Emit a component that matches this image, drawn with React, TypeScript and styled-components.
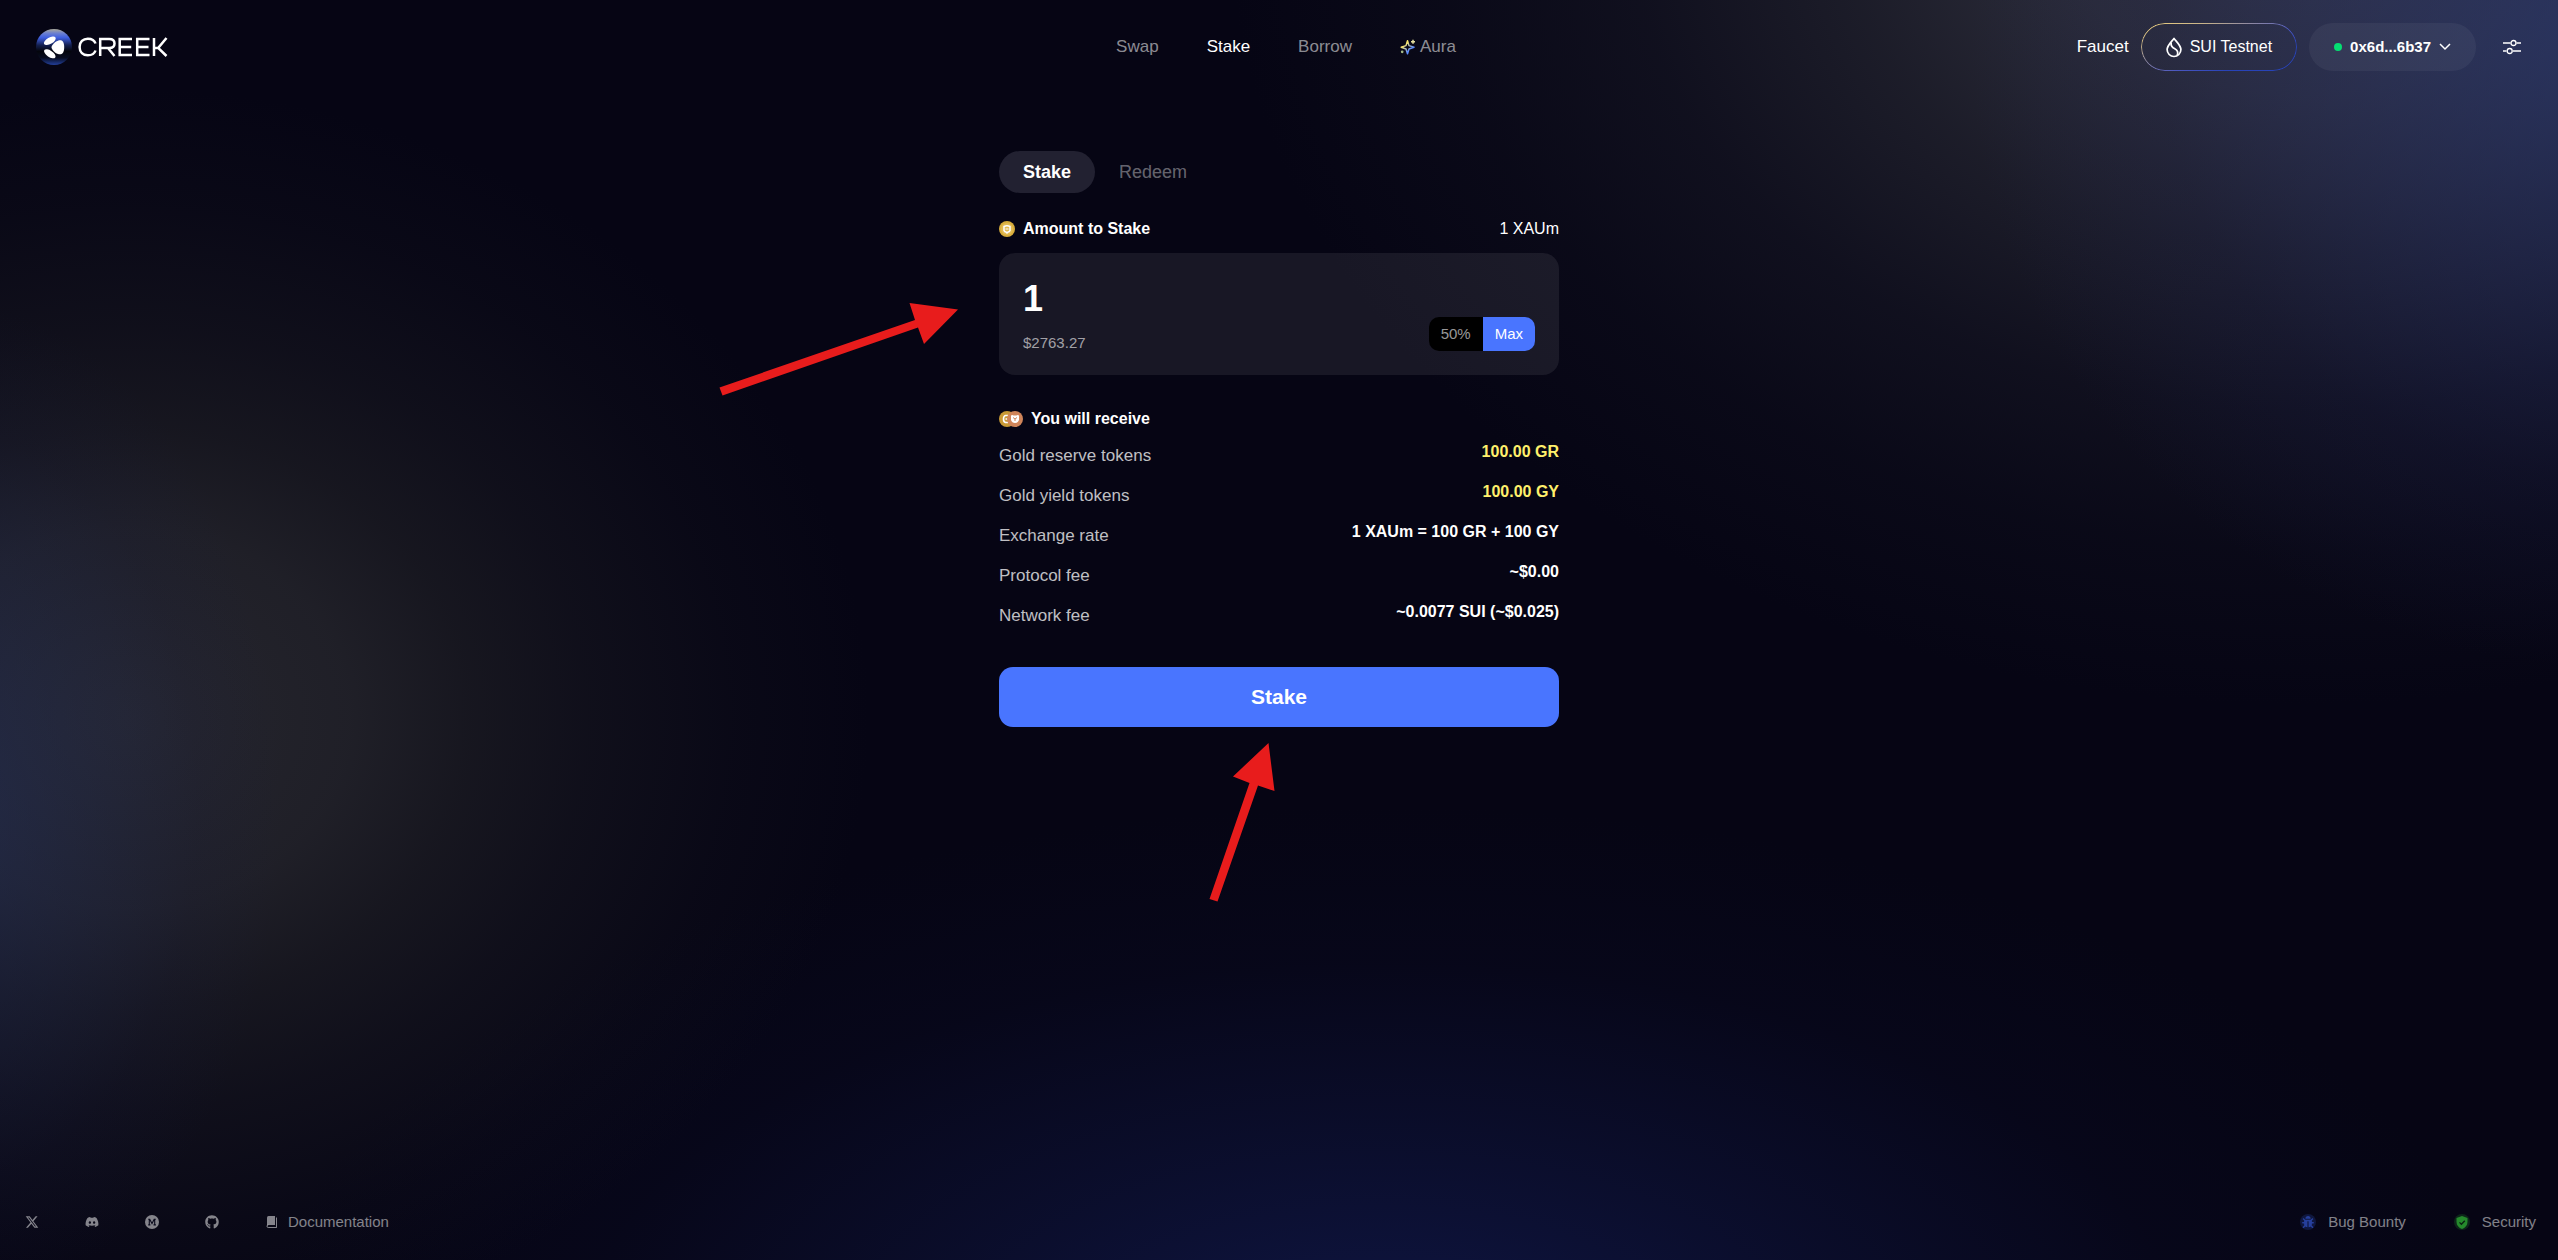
import React, { useState } from "react";
import styled, { createGlobalStyle } from "styled-components";
import { FaDiscord, FaGithub, FaBug } from "react-icons/fa";
import { FaXTwitter } from "react-icons/fa6";

const Global = createGlobalStyle`
  *, *::before, *::after { box-sizing: border-box; }
  body {
    margin: 0;
    background: #060514;
    color: #fff;
    font-family: "Liberation Sans", Arial, sans-serif;
    font-size: 16px;
    line-height: 24px;
  }
  button, input { font: inherit; color: inherit; border: 0; background: none; padding: 0; margin: 0; }
  button { cursor: pointer; }
  a { color: inherit; text-decoration: none; }
  svg { display: block; flex: none; }
`;

const Page = styled.div`
  position: relative;
  min-height: 100vh;
  display: flex;
  flex-direction: column;
  overflow: hidden;
  background:
    radial-gradient(ellipse 25% 50% at 102% 3%, rgba(44, 60, 122, 0.62) 0%, rgba(40, 52, 112, 0.38) 40%, rgba(30, 36, 88, 0.2) 70%, rgba(20, 24, 70, 0) 100%),
    radial-gradient(ellipse 42% 62% at 90% -6%, rgba(50, 51, 66, 1) 0%, rgba(46, 47, 60, 0.92) 22%, rgba(42, 43, 54, 0.62) 42%, rgba(36, 37, 50, 0.34) 62%, rgba(28, 29, 42, 0.18) 80%, rgba(6, 5, 20, 0) 100%),
    radial-gradient(ellipse 13% 40% at -2% 64%, rgba(36, 50, 98, 0.5) 0%, rgba(32, 44, 90, 0.28) 45%, rgba(22, 28, 72, 0.12) 75%, rgba(20, 28, 70, 0) 100%),
    radial-gradient(ellipse 29% 50% at 5% 57%, rgba(38, 38, 46, 1) 0%, rgba(36, 36, 43, 0.85) 30%, rgba(34, 34, 39, 0.6) 46%, rgba(32, 32, 38, 0.38) 62%, rgba(28, 28, 36, 0.16) 82%, rgba(6, 5, 20, 0) 100%),
    radial-gradient(ellipse 44% 44% at 54% 108%, rgba(15, 22, 68, 1) 0%, rgba(13, 18, 56, 0.62) 42%, rgba(10, 12, 42, 0.25) 72%, rgba(6, 5, 20, 0) 100%),
    #060514;
`;

const Header = styled.header`
  display: grid;
  grid-template-columns: 1fr auto 1fr;
  align-items: center;
  height: 94px;
  padding: 0 22px 0 36px;
`;

const Brand = styled.a`
  display: flex;
  align-items: center;
  gap: 6px;
  justify-self: start;
`;

const Nav = styled.nav`
  display: flex;
  gap: 48px;
  font-size: 17px;
`;

const NavLink = styled.a<{ $active?: boolean }>`
  display: flex;
  align-items: center;
  gap: 4px;
  color: ${(p) => (p.$active ? "#fff" : "rgba(255, 255, 255, 0.55)")};
`;

const Actions = styled.div`
  display: flex;
  align-items: center;
  justify-self: end;
  gap: 12px;
`;

const FaucetLink = styled.a`
  font-size: 17px;
`;

const Pill = styled.button<{ $outlined?: boolean }>`
  position: relative;
  display: flex;
  align-items: center;
  gap: 8px;
  height: 48px;
  padding: 0 25px;
  border-radius: 24px;
  background: ${(p) => (p.$outlined ? "transparent" : "rgba(255, 255, 255, 0.05)")};

  &::before {
    content: "";
    display: ${(p) => (p.$outlined ? "block" : "none")};
    position: absolute;
    inset: 0;
    padding: 1px;
    border-radius: 24px;
    background: linear-gradient(160deg, #f0d27a 0%, #c9b48a 22%, #4a56c0 58%, #2843b8 75%);
    mask: linear-gradient(#000 0 0) content-box exclude, linear-gradient(#000 0 0);
  }
`;

const Address = styled.span`
  font-size: 15px;
  font-weight: 700;
`;

const Dot = styled.span`
  width: 8px;
  height: 8px;
  border-radius: 50%;
  background: #05df72;
`;

const IconButton = styled.button`
  display: grid;
  place-items: center;
  width: 48px;
  height: 48px;
`;

const Main = styled.main`
  flex: 1;
  width: 100%;
  max-width: 560px;
  margin: 0 auto;
  padding-top: 57px;
`;

const Tabs = styled.div`
  display: flex;
`;

const Tab = styled.button<{ $active: boolean }>`
  height: 42px;
  padding: 0 24px;
  border-radius: 21px;
  font-size: 18px;
  font-weight: ${(p) => (p.$active ? 700 : 400)};
  color: ${(p) => (p.$active ? "#fff" : "rgba(255, 255, 255, 0.4)")};
  background: ${(p) => (p.$active ? "#222131" : "transparent")};
`;

const SectionHead = styled.div`
  display: flex;
  justify-content: space-between;
  align-items: center;
`;

const SectionTitle = styled.label`
  display: flex;
  align-items: center;
  gap: 8px;
  font-weight: 700;
`;

const AmountSection = styled.section`
  margin-top: 24px;
`;

const AmountCard = styled.div`
  display: flex;
  justify-content: space-between;
  align-items: flex-end;
  height: 122px;
  margin-top: 12px;
  padding: 20px 24px;
  border-radius: 16px;
  background: rgba(255, 255, 255, 0.075);
`;

const AmountColumn = styled.div`
  display: flex;
  flex-direction: column;
  flex: 1;
  gap: 8px;
`;

const AmountInput = styled.input`
  width: 100%;
  height: 48px;
  outline: none;
  font-size: 36px;
  font-weight: 700;
`;

const Fiat = styled.span`
  font-size: 15px;
  color: rgba(255, 255, 255, 0.6);
`;

const Presets = styled.div`
  display: flex;
  margin-bottom: 4px;
  border-radius: 10px;
  overflow: hidden;
`;

const Preset = styled.button<{ $active?: boolean }>`
  height: 34px;
  padding: 0 12px;
  font-size: 15px;
  color: ${(p) => (p.$active ? "#fff" : "rgba(255, 255, 255, 0.6)")};
  background: ${(p) => (p.$active ? "#4975ff" : "#000")};
`;

const Receive = styled.section`
  margin-top: 32px;
`;

const ReceiveTitle = styled.h2`
  display: flex;
  align-items: center;
  gap: 8px;
  margin: 0 0 11px;
  font-size: 16px;
  line-height: 24px;
`;

const Rows = styled.dl`
  display: grid;
  gap: 12px;
  margin: 0;
`;

const Row = styled.div`
  display: flex;
  justify-content: space-between;
  height: 28px;
`;

const Term = styled.dt`
  font-size: 17px;
  line-height: 28px;
  color: rgba(255, 255, 255, 0.75);
`;

const Value = styled.dd<{ $gold?: boolean }>`
  margin: 0;
  font-weight: 700;
  line-height: 20px;
  color: ${(p) => (p.$gold ? "#fff06b" : "#fff")};
`;

const Submit = styled.button`
  width: 100%;
  height: 60px;
  margin-top: 37px;
  border-radius: 14px;
  background: #4975ff;
  font-size: 21px;
  font-weight: 700;
`;

const Footer = styled.footer`
  display: flex;
  justify-content: space-between;
  align-items: center;
  padding: 0 22px 26px 24px;
  font-size: 15px;
  color: rgba(255, 255, 255, 0.5);
`;

const FooterLinks = styled.div<{ $gap: number }>`
  display: flex;
  gap: ${(p) => p.$gap}px;
`;

const FooterLink = styled.a<{ $gap?: number }>`
  display: flex;
  align-items: center;
  gap: ${(p) => p.$gap ?? 8}px;
`;

const IconBox = styled.span`
  display: grid;
  place-items: center;
  width: 16px;
  height: 16px;
`;

const Glow = styled(IconBox)<{ $color: string; $halo: string }>`
  border-radius: 50%;
  color: ${(p) => p.$color};
  background: ${(p) => p.$halo};
`;

const Annotations = styled.svg`
  position: absolute;
  top: 0;
  left: 50%;
  margin-left: -579px;
  pointer-events: none;
`;

const Logo = () => (
  <svg width="36" height="36" viewBox="0 0 36 36" aria-hidden="true">
    <defs>
      <linearGradient id="orb" x1="0" y1="0" x2="0" y2="1">
        <stop offset="0" stopColor="#a9a89a" />
        <stop offset=".12" stopColor="#6b7fd0" />
        <stop offset=".24" stopColor="#3f5fe0" />
        <stop offset=".45" stopColor="#142050" />
        <stop offset=".62" stopColor="#04050c" />
        <stop offset=".8" stopColor="#070c20" />
        <stop offset="1" stopColor="#23409c" />
      </linearGradient>
    </defs>
    <circle cx="18" cy="18" r="18" fill="url(#orb)" />
    <g fill="#fff">
      <path d="M15.500 18.200c0-1.500 2.600-5.200 6.500-6.500 3.400-1.100 6.200.3 6.200 6.500s-2.800 7.900-6.200 6.800c-3.900-1.300-6.500-5.300-6.500-6.800z" />
      <ellipse cx="13.800" cy="11.800" rx="6.600" ry="3.200" transform="rotate(-30 13.800 11.800)" />
      <ellipse cx="13.800" cy="24.800" rx="6.600" ry="3.200" transform="rotate(34 13.800 24.800)" />
    </g>
  </svg>
);

const Wordmark = () => (
  <svg width="90" height="20" viewBox="0 0 90 20" role="img" aria-label="CREEK" fill="none" stroke="#fff" strokeWidth="2.500">
    <path d="M17.500 6.500C16.500 3.300 13.500 1.700 9.800 1.700 5 1.700 1.600 5 1.600 10s3.400 8.300 8.200 8.300c3.700 0 6.700-1.600 7.700-4.800" />
    <path d="M22.200 19V2h9c3.300 0 5.300 1.500 5.300 4.400s-2 4.500-5.300 4.500h-9M30 11l6.500 8" />
    <path d="M54 2H41.700v16H54M41.700 9.900h11.500M71.500 2H59.200v16h12.300M59.200 9.900h11.300M76 1v18M76 11h4.500M88.500 1l-8.300 10L88.500 19" />
  </svg>
);

const Sparkle = () => (
  <svg width="16" height="16" viewBox="0 0 16 16" fill="none" stroke="url(#aura)" strokeWidth="1.500" strokeLinejoin="round" aria-hidden="true">
    <defs>
      <linearGradient id="aura" gradientUnits="userSpaceOnUse" x1="3" y1="3" x2="12" y2="14">
        <stop offset=".2" stopColor="#ffe96b" />
        <stop offset=".75" stopColor="#5b8cff" />
      </linearGradient>
    </defs>
    <path d="M7.500 1.800 9 6.600l5 1.700-5 1.700-1.500 4.800L6 10 1.200 8.300 6 6.600z" />
    <path d="M13 .8v4M11 2.800h4" stroke="#e8e3a0" />
    <circle cx="2.200" cy="12.800" r=".6" stroke="#a9c08a" />
  </svg>
);

const Drop = () => (
  <svg width="16" height="21" viewBox="0 0 16 21" fill="none" stroke="#fff" strokeWidth="1.700" strokeLinejoin="round" aria-hidden="true">
    <path d="M8 1.400c2.200 3 6.900 7 6.900 11.200A6.900 6.900 0 0 1 1.100 12.600C1.100 8.400 5.800 4.400 8 1.400z" />
    <path d="M5.200 5.600c-.8 3.600 1.200 4.900 3.600 6.200 2.500 1.300 3.700 3.400 2.400 6.600" />
  </svg>
);

const Chevron = () => (
  <svg width="12" height="8" viewBox="0 0 12 8" fill="none" stroke="#fff" strokeWidth="1.500" aria-hidden="true">
    <path d="M1 1l5 5 5-5" />
  </svg>
);

const Sliders = () => (
  <svg width="20" height="18" viewBox="0 0 20 18" fill="none" stroke="#fff" strokeWidth="1.300" aria-hidden="true">
    <path d="M1 5h7.500M14.500 5H19M1 13h3.500M11 13h8" />
    <circle cx="11.500" cy="5" r="2.500" />
    <circle cx="7.700" cy="13" r="2.500" />
  </svg>
);

const Coin = () => (
  <svg width="16" height="16" viewBox="0 0 16 16" aria-hidden="true">
    <circle cx="8" cy="8" r="8" fill="#d9ae3c" />
    <circle cx="8" cy="8" r="6" fill="#e2bb55" />
    <path d="M5 5.500q3-1.500 6 0v4Q10 11 9 11l-1 1-1-1q-1 0-2-1.500z" fill="none" stroke="#fff" strokeWidth="1.500" />
    <path d="M6.500 8h3" stroke="#fff" />
  </svg>
);

const CoinPair = () => (
  <svg width="24" height="16" viewBox="0 0 24 16" aria-hidden="true">
    <circle cx="8" cy="8" r="8" fill="#c99a35" />
    <path d="M9 4.500H6.500Q4.500 5 4.500 8t2 3.500H9M6.500 8H9" fill="none" stroke="#fff" strokeWidth="1.600" />
    <circle cx="16" cy="8" r="8" fill="#d0855a" />
    <path d="M12 4.500q1.500-.8 2.500 0h3q1-.8 2.500 0v4.500q-1 3-4 3t-4-3z" fill="#fff" />
    <path d="M14 6.500l2 1.500 2-1.500M16 8v2" stroke="#d0855a" fill="none" />
  </svg>
);

const MediumIcon = () => (
  <svg width="14" height="14" viewBox="0 0 14 14" aria-hidden="true">
    <circle cx="7" cy="7" r="7" fill="currentColor" />
    <path d="M3.200 4.200h1.500L7 8.500l2.200-4.300h1.600M4.300 4.300v5.200M9.700 4.200v5.500M3.200 9.900h2.200M8.500 9.900h2.400" fill="none" stroke="#0a0a1c" strokeWidth="1.100" />
  </svg>
);

const DocIcon = () => (
  <svg width="12" height="14" viewBox="0 0 12 14" aria-hidden="true">
    <path d="M2.500 1H9v9H1V2.500Q1 1 2.500 1z" fill="currentColor" />
    <path d="M10.500 2.500v10H2.300Q1 12.500 1 11.200t1.300-1.200" fill="none" stroke="currentColor" />
  </svg>
);

const ShieldIcon = () => (
  <svg width="12" height="13" viewBox="0 0 12 13" aria-hidden="true">
    <path d="M6 0l5.500 2v4c0 3.500-2.300 5.800-5.500 7C2.800 11.800.5 9.500.5 6V2z" fill="currentColor" />
    <path d="M3.500 6.400l1.900 1.900 3.400-3.500" fill="none" stroke="#0a2212" strokeWidth="1.300" />
  </svg>
);

const quote = [
  { term: "Gold reserve tokens", value: "100.00 GR", gold: true },
  { term: "Gold yield tokens", value: "100.00 GY", gold: true },
  { term: "Exchange rate", value: "1 XAUm = 100 GR + 100 GY" },
  { term: "Protocol fee", value: "~$0.00" },
  { term: "Network fee", value: "~0.0077 SUI (~$0.025)" },
];

export default function App() {
  const [tab, setTab] = useState("Stake");
  const [amount, setAmount] = useState("1");

  return (
    <Page>
      <Global />
      <Header>
        <Brand href="#">
          <Logo />
          <Wordmark />
        </Brand>
        <Nav>
          <NavLink href="#swap">Swap</NavLink>
          <NavLink href="#stake" $active>Stake</NavLink>
          <NavLink href="#borrow">Borrow</NavLink>
          <NavLink href="#aura"><Sparkle />Aura</NavLink>
        </Nav>
        <Actions>
          <FaucetLink href="#faucet">Faucet</FaucetLink>
          <Pill $outlined><Drop />SUI Testnet</Pill>
          <Pill><Dot /><Address>0x6d...6b37</Address><Chevron /></Pill>
          <IconButton aria-label="Settings"><Sliders /></IconButton>
        </Actions>
      </Header>

      <Main>
        <Tabs>
          {["Stake", "Redeem"].map((name) => (
            <Tab key={name} $active={tab === name} onClick={() => setTab(name)}>{name}</Tab>
          ))}
        </Tabs>

        <AmountSection>
          <SectionHead>
            <SectionTitle htmlFor="amount"><Coin />Amount to Stake</SectionTitle>
            <span>1 XAUm</span>
          </SectionHead>
          <AmountCard>
            <AmountColumn>
              <AmountInput id="amount" value={amount} onChange={(e) => setAmount(e.target.value)} />
              <Fiat>$2763.27</Fiat>
            </AmountColumn>
            <Presets>
              <Preset onClick={() => setAmount("0.5")}>50%</Preset>
              <Preset $active onClick={() => setAmount("1")}>Max</Preset>
            </Presets>
          </AmountCard>
        </AmountSection>

        <Receive>
          <ReceiveTitle><CoinPair />You will receive</ReceiveTitle>
          <Rows>
            {quote.map((row) => (
              <Row key={row.term}>
                <Term>{row.term}</Term>
                <Value $gold={row.gold}>{row.value}</Value>
              </Row>
            ))}
          </Rows>
        </Receive>

        <Submit>Stake</Submit>
      </Main>

      <Footer>
        <FooterLinks $gap={44}>
          <FooterLink href="#x" aria-label="X"><IconBox><FaXTwitter size={14} /></IconBox></FooterLink>
          <FooterLink href="#discord" aria-label="Discord"><IconBox><FaDiscord size={14} /></IconBox></FooterLink>
          <FooterLink href="#medium" aria-label="Medium"><IconBox><MediumIcon /></IconBox></FooterLink>
          <FooterLink href="#github" aria-label="GitHub"><IconBox><FaGithub size={14} /></IconBox></FooterLink>
          <FooterLink href="#docs"><IconBox><DocIcon /></IconBox>Documentation</FooterLink>
        </FooterLinks>
        <FooterLinks $gap={48}>
          <FooterLink href="#bounty" $gap={12}>
            <Glow $color="#263f9c" $halo="rgba(38, 63, 156, 0.3)"><FaBug size={12} /></Glow>Bug Bounty
          </FooterLink>
          <FooterLink href="#security" $gap={12}>
            <Glow $color="#258a2c" $halo="rgba(37, 138, 44, 0.25)"><ShieldIcon /></Glow>Security
          </FooterLink>
        </FooterLinks>
      </Footer>

      <Annotations width="600" height="920" viewBox="700 0 600 920" fill="#e81c1c" aria-hidden="true">
        <path d="M719.500 387.500 915 320l-5.500-17L958 309.500 924 344l-6-16.500L722.500 395.500z" />
        <path d="M1209.500 899 1249.500 783l-16.500-6.500L1268.500 743l6 48-16.500-5.500L1217.500 901.500z" />
      </Annotations>
    </Page>
  );
}
